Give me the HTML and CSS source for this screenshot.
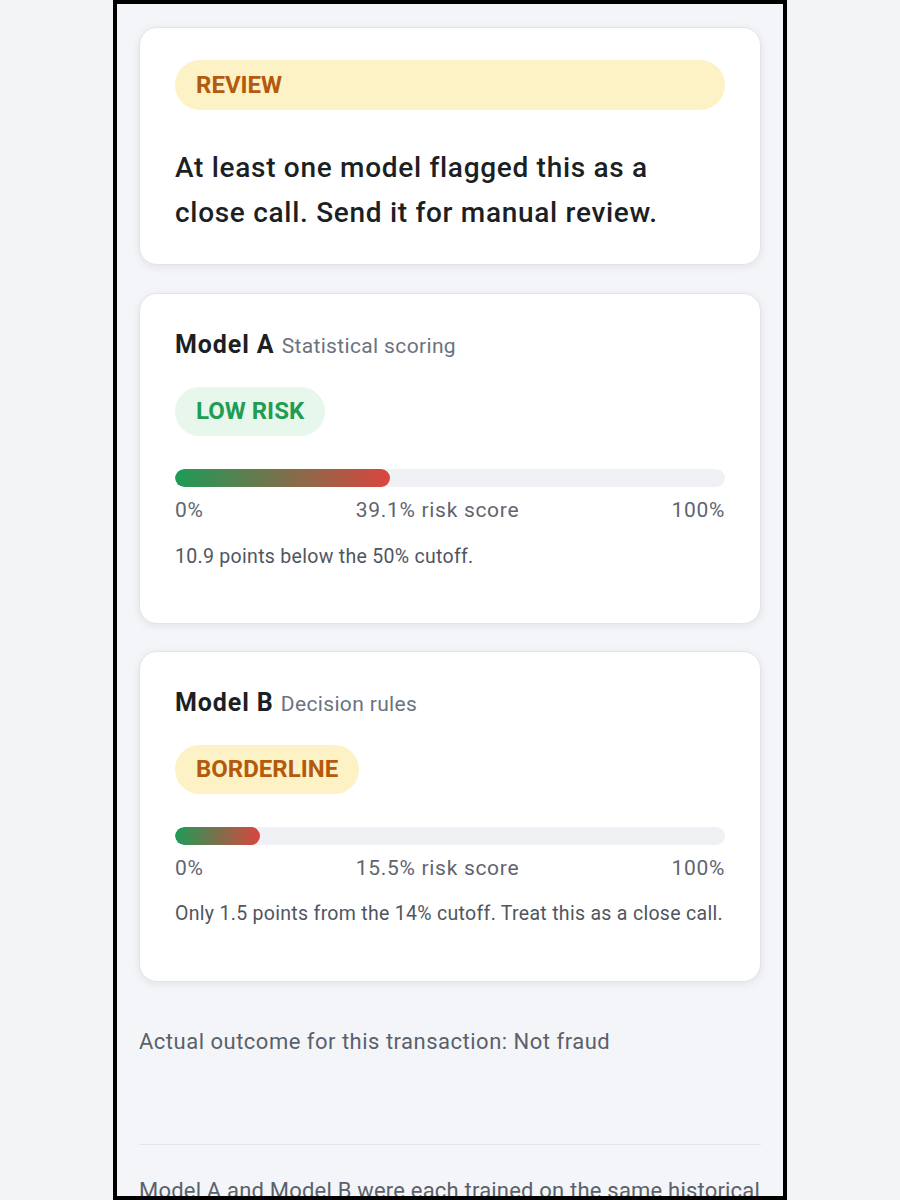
FILE: index.html
```html
<!DOCTYPE html>
<html lang="en">
<head>
<meta charset="utf-8">
<title>Fraud check</title>
<link rel="stylesheet" href="styles.css">
</head>
<body>
<div class="phone">
  <div class="screen">
    <section class="card verdict">
      <div class="pill pill-amber pill-wide">REVIEW</div>
      <p class="verdict-text">At least one model flagged this as a close call. Send it for manual review.</p>
    </section>

    <section class="card model">
      <h2 class="model-title">Model A <span class="model-sub">Statistical scoring</span></h2>
      <div class="pill pill-green">LOW RISK</div>
      <div class="track"><div class="fill" style="width:39.1%"></div></div>
      <div class="scale"><span>0%</span><span>39.1% risk score</span><span>100%</span></div>
      <p class="note">10.9 points below the 50% cutoff.</p>
    </section>

    <section class="card model">
      <h2 class="model-title">Model B <span class="model-sub">Decision rules</span></h2>
      <div class="pill pill-amber">BORDERLINE</div>
      <div class="track"><div class="fill" style="width:15.5%"></div></div>
      <div class="scale"><span>0%</span><span>15.5% risk score</span><span>100%</span></div>
      <p class="note">Only 1.5 points from the 14% cutoff. Treat this as a close call.</p>
    </section>

    <p class="outcome">Actual outcome for this transaction: Not fraud</p>
    <hr class="divider">
    <p class="explain">Model A and Model B were each trained on the same historical transactions, but they use different methods to estimate risk.</p>
  </div>
</div>
</body>
</html>
```

FILE: styles.css
```css
html, body {
  margin: 0;
  padding: 0;
}
body {
  background: #f3f4f6;
  font-family: Roboto, "Liberation Sans", sans-serif;
  color: #1f2328;
}
.phone {
  box-sizing: border-box;
  width: 674px;
  height: 1200px;
  margin: 0 auto;
  border: 4px solid #000;
  background: #f4f5f8;
  overflow: hidden;
}
.screen {
  padding: 23px 22px 0;
  display: flex;
  flex-direction: column;
}
.card {
  background: #fff;
  border: 1px solid #e2e4e9;
  border-radius: 18px;
  box-shadow: 0 2px 8px rgba(16, 24, 40, 0.08);
}
.verdict {
  padding: 32px 35px 29px;
  margin-bottom: 28px;
}
.pill {
  display: inline-block;
  align-self: flex-start;
  font-size: 24px;
  font-weight: 700;
  line-height: 33px;
  padding: 8px 21px;
  border-radius: 999px;
}
.pill-wide {
  display: block;
  line-height: 34px;
}
.pill-amber {
  background: #fdf1c6;
  color: #b45a0c;
}
.pill-green {
  background: #e7f7ec;
  color: #1f9d55;
}
.verdict-text {
  margin: 35px 0 0;
  font-size: 28px;
  font-weight: 500;
  letter-spacing: 0.7px;
  line-height: 45px;
  color: #1c1f24;
  max-width: 535px;
}
.model {
  display: flex;
  flex-direction: column;
  padding: 33px 35px 52px;
  margin-bottom: 27px;
}
.model-title {
  margin: 0 0 23px;
  font-size: 25px;
  font-weight: 700;
  letter-spacing: 0.9px;
  line-height: 36px;
  color: #1c1f24;
}
.model-sub {
  font-size: 21px;
  font-weight: 400;
  letter-spacing: 0.35px;
  color: #6b7280;
}
.track {
  margin-top: 33px;
  height: 18px;
  border-radius: 9px;
  background: #f0f1f4;
  overflow: hidden;
}
.fill {
  height: 100%;
  border-radius: 9px;
  background: linear-gradient(to right, #1e9b57, #d9463f);
}
.scale {
  display: flex;
  justify-content: space-between;
  margin-top: 8px;
  font-size: 21px;
  letter-spacing: 0.7px;
  line-height: 31.5px;
  color: #5f6570;
}
.note {
  margin: 15px 0 0;
  font-size: 19.5px;
  letter-spacing: 0.3px;
  line-height: 29.25px;
  color: #4f5661;
}
.outcome {
  margin: 16.5px 0 0;
  font-size: 22px;
  letter-spacing: 0.5px;
  line-height: 33px;
  color: #5a616c;
}
.divider {
  border: 0;
  border-top: 1px solid #e3e5e9;
  margin: 86px 0 0;
  width: 100%;
}
.explain {
  margin: 28.5px 0 0;
  font-size: 22px;
  letter-spacing: 0.2px;
  line-height: 33px;
  color: #5a616c;
}
```
